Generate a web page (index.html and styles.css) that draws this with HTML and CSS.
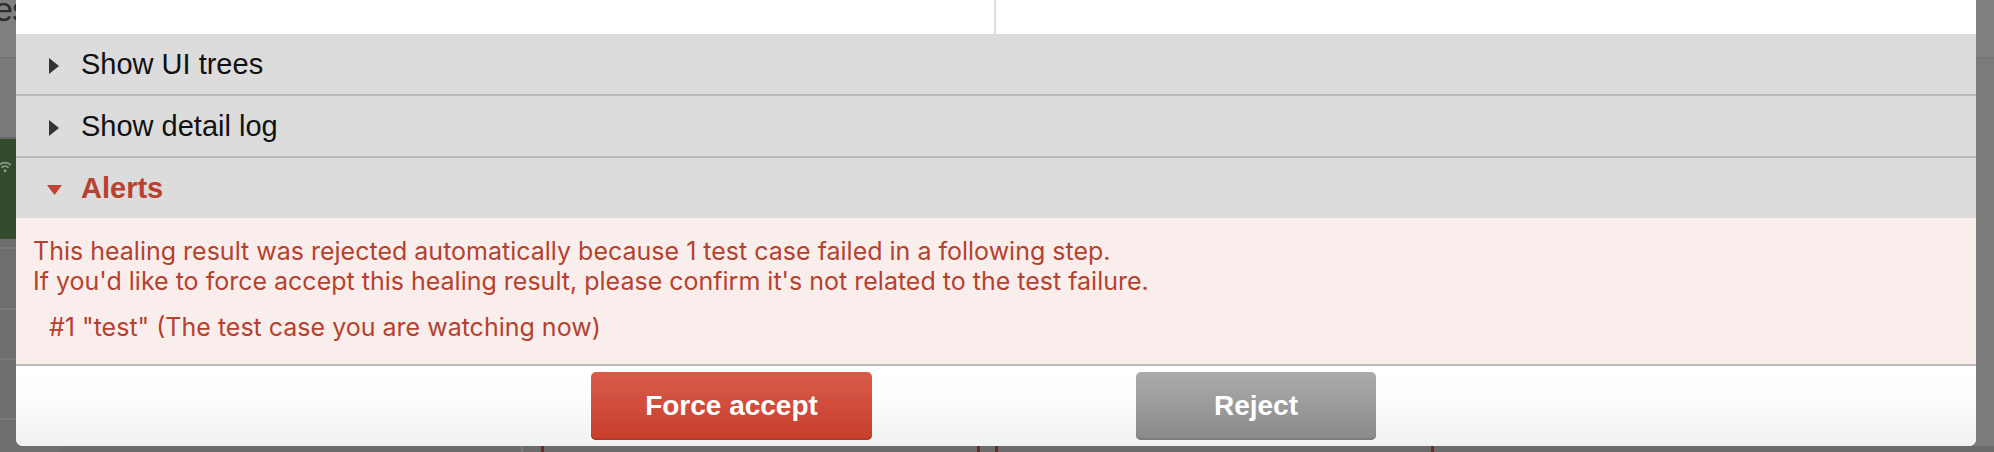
FILE: index.html
```html
<!DOCTYPE html>
<html lang="en">
<head>
<meta charset="utf-8">
<title>Healing result</title>
<link rel="stylesheet" href="styles.css">
</head>
<body>
<div class="page">
  <aside class="side">
    <div class="side-top"><span class="side-title">es</span></div>
    <div class="side-mid"></div>
    <div class="side-green">
      <svg class="wifi" width="14" height="13" viewBox="0 0 14 13">
        <path d="M1 5 A9 9 0 0 1 13 5" fill="none" stroke="#8d9a89" stroke-width="1.8"/>
        <path d="M3.4 7.6 A5.5 5.5 0 0 1 10.6 7.6" fill="none" stroke="#8d9a89" stroke-width="1.8"/>
        <circle cx="7" cy="10.8" r="1.5" fill="#8d9a89"/>
      </svg>
    </div>
    <div class="side-rows">
      <div class="side-row r1"></div>
      <div class="side-row r2"></div>
      <div class="side-row r3"></div>
      <div class="side-row r4"></div>
      <div class="side-row r5"></div>
    </div>
  </aside>
  <main class="main">
    <div class="main-top"></div>
    <div class="main-body"></div>
    <div class="main-bottom">
      <span class="bar bar-light m1"></span>
      <span class="bar bar-red m2"></span>
      <span class="bar bar-red m3"></span>
      <span class="bar bar-red m4"></span>
      <span class="bar bar-red m3"></span>
    </div>
  </main>
</div>

<div class="modal">
  <div class="panes">
    <div class="pane"></div>
    <div class="divider"></div>
    <div class="pane"></div>
  </div>

  <div class="section-head with-sep">
    <svg class="tri-right" width="10" height="16" viewBox="0 0 10 16"><polygon points="0,0 10,8 0,16" fill="#333"/></svg>
    <span class="head-label">Show UI trees</span>
  </div>
  <div class="section-head with-sep">
    <svg class="tri-right" width="10" height="16" viewBox="0 0 10 16"><polygon points="0,0 10,8 0,16" fill="#333"/></svg>
    <span class="head-label">Show detail log</span>
  </div>
  <div class="section-head alerts-head">
    <svg class="tri-down" width="15" height="10" viewBox="0 0 15 10"><polygon points="0,0 15,0 7.5,10" fill="#bd4434"/></svg>
    <span class="head-label alerts-label">Alerts</span>
  </div>

  <div class="alert-body">
    <p>This healing result was rejected automatically because 1 test case failed in a following step.</p>
    <p>If you'd like to force accept this healing result, please confirm it's not related to the test failure.</p>
    <p class="case">#1 "test" (The test case you are watching now)</p>
  </div>

  <div class="footer">
    <button class="btn btn-danger">Force accept</button>
    <button class="btn btn-muted">Reject</button>
  </div>
</div>
</body>
</html>
```

FILE: styles.css
```css
html, body {
  margin: 0;
  padding: 0;
}

body {
  width: 1994px;
  height: 452px;
  overflow: hidden;
  position: relative;
  background: #6c6c6c;
  font-family: "Liberation Sans", Arial, sans-serif;
}

/* dimmed page behind the modal */
.page {
  display: grid;
  grid-template-columns: 60px 1fr;
  height: 452px;
}

.side {
  display: flex;
  flex-direction: column;
  overflow: hidden;
}

.side-top {
  height: 57px;
  background: #7f7f7f;
  border-bottom: 1px solid #737373;
}

.side-title {
  display: block;
  margin-top: 2px;
  margin-left: -6px;
  font-size: 34px;
  line-height: 14px;
  letter-spacing: -1px;
  color: #2e2e2e;
}

.side-mid {
  height: 79px;
  background: #797979;
  border-bottom: 2px solid #676767;
}

.side-green {
  height: 100px;
  background: #334a2d;
  padding-top: 21px;
  box-sizing: border-box;
}

.wifi {
  display: block;
  margin-left: -2px;
}

.side-rows {
  flex: 1;
  display: flex;
  flex-direction: column;
  background: #6e6e6e;
}

.side-row {
  border-bottom: 2px solid #7a7a7a;
}

.r1 { height: 8px; }
.r2 { height: 59px; }
.r3 { height: 48px; }
.r4 { height: 58px; }
.r5 { flex: 1; border-bottom: none; }

.main {
  display: flex;
  flex-direction: column;
}

.main-top {
  height: 57px;
  background: #7f7f7f;
  border-bottom: 2px solid #777;
}

.main-body {
  flex: 1;
  background: #7b7b7b;
}

.main-bottom {
  height: 6px;
  background: #6b6b6b;
  display: flex;
}

.bar {
  display: block;
  height: 6px;
}

.bar-light {
  width: 2px;
  background: #7c7c7c;
}

.bar-red {
  width: 3px;
  background: #6b2a22;
}

.m1 { margin-left: 461px; }
.m2 { margin-left: 18px; }
.m3 { margin-left: 433px; }
.m4 { margin-left: 15px; }

/* modal */
.modal {
  position: absolute;
  left: 16px;
  top: 0;
  width: 1960px;
  height: 446px;
  background: #fff;
  border-radius: 0 0 7px 7px;
  overflow: hidden;
  display: flex;
  flex-direction: column;
}

.panes {
  height: 34px;
  flex: 0 0 34px;
  display: grid;
  grid-template-columns: 978px 2px 1fr;
}

.divider {
  background: #dddddd;
}

.section-head {
  flex: 0 0 60px;
  height: 60px;
  background: #dcdcdc;
  display: flex;
  align-items: center;
  padding-left: 33px;
  box-sizing: border-box;
}

.section-head.with-sep {
  flex-basis: 62px;
  height: 62px;
  border-bottom: 2px solid #bababa;
}

.tri-right {
  display: block;
  margin-top: 3px;
  margin-right: 22px;
}

.tri-down {
  display: block;
  margin-left: -2px;
  margin-top: 3px;
  margin-right: 19px;
}

.head-label {
  font-size: 29px;
  color: #111;
}

.alerts-label {
  font-weight: bold;
  color: #b9412f;
}

.alert-body {
  flex: 0 0 148px;
  box-sizing: border-box;
  background: #f9eeec;
  border-bottom: 2px solid #bbbbbb;
  padding: 18px 17px 0;
  color: #b5412f;
  font-family: Inter, "Liberation Sans", Arial, sans-serif;
  font-size: 25px;
  line-height: 30px;
}

.alert-body p {
  margin: 0;
}

.alert-body .case {
  margin-top: 16px;
  padding-left: 16px;
}

.footer {
  flex: 1;
  background: linear-gradient(#ffffff 0%, #fcfcfc 45%, #f1f1f1 100%);
  display: flex;
  align-items: center;
  padding-left: 575px;
  gap: 264px;
}

.btn {
  height: 68px;
  border: none;
  border-radius: 5px;
  color: #fff;
  font-family: "Liberation Sans", Arial, sans-serif;
  font-weight: bold;
  font-size: 28px;
  padding: 0;
}

.btn-danger {
  width: 281px;
  background: linear-gradient(#d95b4a, #c73e2c);
  box-shadow: inset 0 -2px 0 #b5392a;
}

.btn-muted {
  width: 240px;
  background: linear-gradient(#ababab, #8a8a8a);
  box-shadow: inset 0 -2px 0 #7d7d7d;
}
```
